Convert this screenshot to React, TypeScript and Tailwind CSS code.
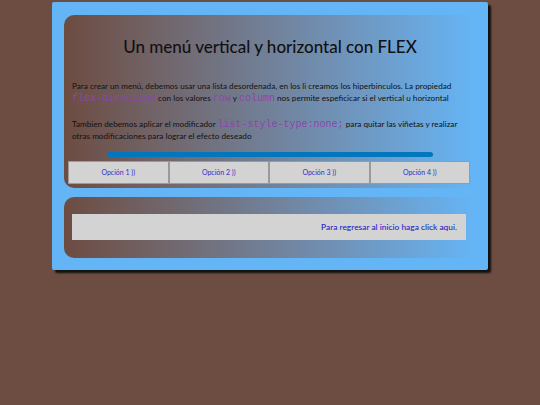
export default function App() {
  const opciones = ["Opción 1 ))", "Opción 2 ))", "Opción 3 ))", "Opción 4 ))"];
  const code = "font-['Liberation_Mono',monospace] text-[10px] leading-none text-[#8e44ad]";

  return (
    <main className="min-h-[405px] bg-[#6d4c41] pt-[2px] font-['Lato',sans-serif]">
      <div className="ml-[52px] w-[436px] rounded-[2px] bg-[#64b5f6] px-[12px] pb-[12px] pt-[13px] shadow-[3px_3px_2px_#111]">
        <section className="rounded-[10px] bg-gradient-to-r from-[#6d4c41] to-[#64b5f6] px-[4px] pb-[4px] pt-[20px]">
          <h1 className="text-center text-[17px] leading-[24px] font-medium text-[#111]">
            Un menú vertical y horizontal con FLEX
          </h1>

          <p className="mt-[21px] px-[4px] text-[8.2px] leading-[12px] text-[#111]">
            Para crear un menú, debemos usar una lista desordenada, en los li creamos los hiperbinculos. La propiedad{" "}
            <span className={code}>flex-direction</span> con los valores <span className={code}>row</span> y{" "}
            <span className={code}>column</span> nos permite espeficicar si el vertical u horizontal
          </p>

          <p className="mt-[14px] px-[4px] text-[8.2px] leading-[12px] text-[#111]">
            Tambien debemos aplicar el modificador <span className={code}>list-style-type:none;</span> para quitar las
            viñetas y realizar otras modificaciones para lograr el efecto deseado
          </p>

          <div className="ml-[39px] mt-[10px] h-[5px] w-[326px] rounded-full bg-[#0277bd]" />

          <ul className="mt-[4px] flex w-[402px] list-none">
            {opciones.map((o) => (
              <li
                key={o}
                className="flex h-[23px] flex-1 items-center justify-center border border-[#9a9a9a] bg-[#d3d3d3] text-[7px] text-[#3030c8]"
              >
                {o}
              </li>
            ))}
          </ul>
        </section>

        <section className="mt-[9px] rounded-[10px] bg-gradient-to-r from-[#6d4c41] to-[#64b5f6] px-[8px] pb-[18px] pt-[17px]">
          <div className="flex h-[26px] w-[394px] items-center justify-end bg-[#d3d3d3] pr-[9px]">
            <a className="text-[8.4px] font-medium text-[#2323c8]">Para regresar al inicio haga click aqui.</a>
          </div>
        </section>
      </div>
    </main>
  );
}
